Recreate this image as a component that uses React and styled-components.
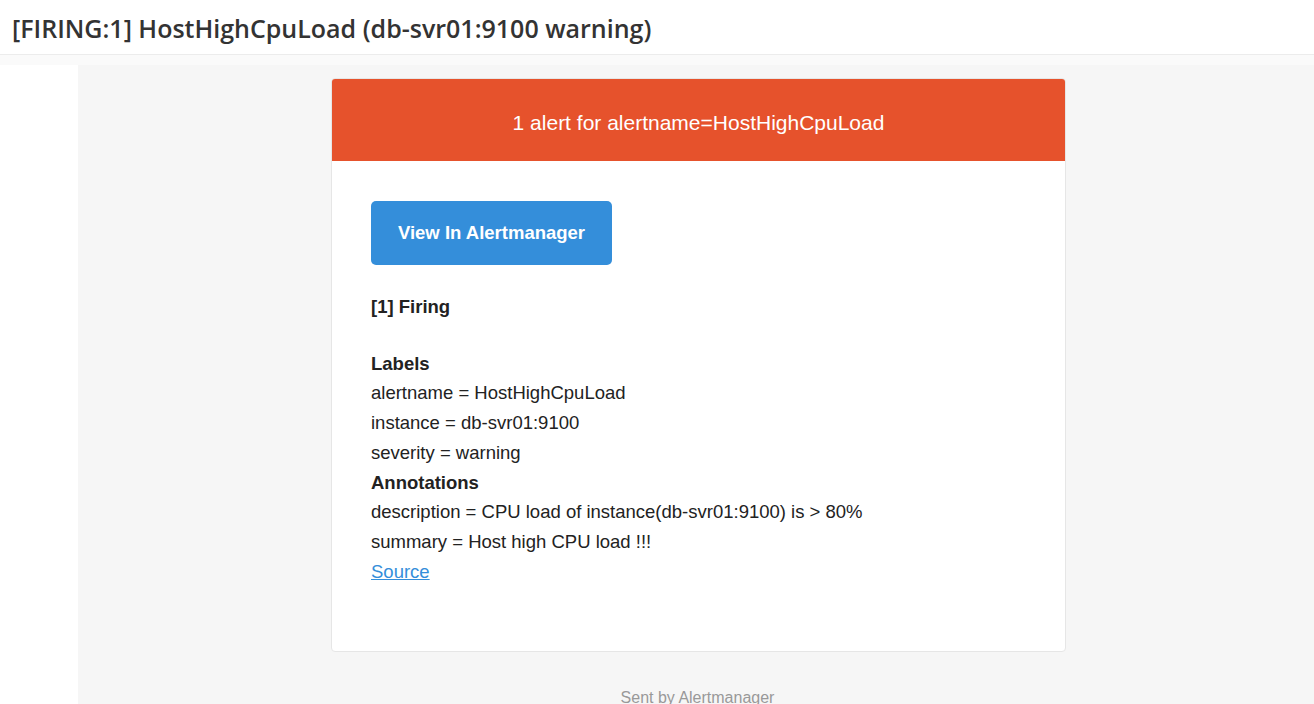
import React from 'react';
import styled, { createGlobalStyle } from 'styled-components';

const GlobalStyle = createGlobalStyle`
  html, body {
    margin: 0;
    padding: 0;
    background: #ffffff;
    overflow: hidden;
  }
  * {
    box-sizing: border-box;
  }
`;

const Page = styled.div`
  width: 1314px;
  height: 704px;
  display: flex;
  flex-direction: column;
  overflow: hidden;
`;

const Subject = styled.header`
  flex-shrink: 0;
  height: 55px;
  padding: 1px 12px 0;
  display: flex;
  align-items: center;
  border-bottom: 1px solid #ececec;
  font-family: "Open Sans", "Noto Sans", sans-serif;
  font-weight: 600;
  font-size: 25px;
  color: #333333;
`;

const Strip = styled.div`
  flex-shrink: 0;
  height: 10px;
  background: #fafafa;
`;

const Body = styled.div`
  flex: 1;
  display: flex;
`;

const Gutter = styled.div`
  width: 78px;
  background: #ffffff;
`;

const Canvas = styled.main`
  flex: 1;
  background: #f6f6f6;
  padding-top: 13px;
  display: flex;
  flex-direction: column;
  align-items: center;
  font-family: "Liberation Sans", Arial, Helvetica, sans-serif;
  color: #222222;
`;

const Card = styled.section`
  width: 735px;
  margin-left: 5px;
  background: #ffffff;
  border: 1px solid #e6e6e6;
  border-radius: 4px;
  overflow: hidden;
`;

const CardHead = styled.div`
  height: 82px;
  padding-top: 6px;
  background: #e6522c;
  color: #ffffff;
  font-size: 21px;
  display: flex;
  align-items: center;
  justify-content: center;
`;

const CardBody = styled.div`
  padding: 40px 39px 65px;
  font-size: 18.5px;
  line-height: 29.7px;
`;

const Button = styled.a`
  display: inline-flex;
  align-items: center;
  justify-content: center;
  width: 241px;
  height: 64px;
  background: #348eda;
  color: #ffffff;
  border-radius: 5px;
  font-weight: bold;
  font-size: 18.5px;
  text-decoration: none;
  margin-bottom: 27px;
`;

const Line = styled.div`
  font-weight: ${(p) => (p.$bold ? 'bold' : 'normal')};
  margin-bottom: ${(p) => (p.$gap ? '27px' : '0')};
`;

const Source = styled.a`
  color: #348eda;
  text-decoration: underline;
`;

const Footer = styled.footer`
  margin-top: 37px;
  font-size: 16px;
  color: #999999;
  margin-left: 3px;
`;

const labels = [
  ['alertname', 'HostHighCpuLoad'],
  ['instance', 'db-svr01:9100'],
  ['severity', 'warning'],
];

const annotations = [
  ['description', 'CPU load of instance(db-svr01:9100) is > 80%'],
  ['summary', 'Host high CPU load !!!'],
];

export default function App() {
  return (
    <Page>
      <GlobalStyle />
      <Subject>[FIRING:1] HostHighCpuLoad (db-svr01:9100 warning)</Subject>
      <Strip />
      <Body>
        <Gutter />
        <Canvas>
          <Card>
            <CardHead>1 alert for alertname=HostHighCpuLoad</CardHead>
            <CardBody>
              <Button href="#">View In Alertmanager</Button>
              <Line $bold $gap>[1] Firing</Line>
              <Line $bold>Labels</Line>
              {labels.map(([k, v]) => (
                <Line key={k}>{k} = {v}</Line>
              ))}
              <Line $bold>Annotations</Line>
              {annotations.map(([k, v]) => (
                <Line key={k}>{k} = {v}</Line>
              ))}
              <Line>
                <Source href="#">Source</Source>
              </Line>
            </CardBody>
          </Card>
          <Footer>Sent by Alertmanager</Footer>
        </Canvas>
      </Body>
    </Page>
  );
}
